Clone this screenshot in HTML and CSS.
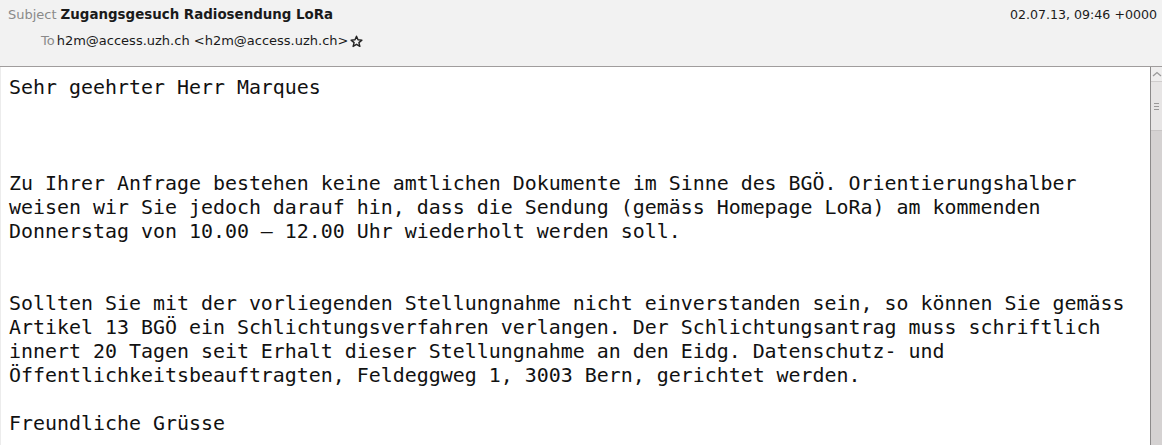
FILE: index.html
```html
<!DOCTYPE html>
<html>
<head>
<meta charset="utf-8">
<link rel="stylesheet" href="styles.css">
</head>
<body>
<div class="app">
  <header class="hdr">
    <div class="row row1">
      <span class="lbl">Subject</span>
      <span class="subj">Zugangsgesuch Radiosendung LoRa</span>
      <span class="date">02.07.13, 09:46 +0000</span>
    </div>
    <div class="row row2">
      <span class="lbl">To</span>
      <span class="addr">h2m@access.uzh.ch &lt;h2m@access.uzh.ch&gt;</span>
      <svg class="star" width="13" height="13" viewBox="0 0 13 13"><path d="M6.5 1.2 L8 4.8 L11.9 5.1 L8.9 7.6 L9.9 11.4 L6.5 9.3 L3.1 11.4 L4.1 7.6 L1.1 5.1 L5 4.8 Z" fill="none" stroke="#222" stroke-width="1.4" stroke-linejoin="round"/></svg>
    </div>
  </header>
  <main class="main">
    <pre class="msg">Sehr geehrter Herr Marques



Zu Ihrer Anfrage bestehen keine amtlichen Dokumente im Sinne des BGÖ. Orientierungshalber
weisen wir Sie jedoch darauf hin, dass die Sendung (gemäss Homepage LoRa) am kommenden
Donnerstag von 10.00 – 12.00 Uhr wiederholt werden soll.


Sollten Sie mit der vorliegenden Stellungnahme nicht einverstanden sein, so können Sie gemäss
Artikel 13 BGÖ ein Schlichtungsverfahren verlangen. Der Schlichtungsantrag muss schriftlich
innert 20 Tagen seit Erhalt dieser Stellungnahme an den Eidg. Datenschutz- und
Öffentlichkeitsbeauftragten, Feldeggweg 1, 3003 Bern, gerichtet werden.

Freundliche Grüsse</pre>
    <div class="sbar">
      <div class="sb-btn"><svg width="10" height="6" viewBox="0 0 10 6"><path d="M1 5 L5 1.5 L9 5" fill="none" stroke="#9a9a9a" stroke-width="1.3"/></svg></div>
      <div class="sb-thumb"><span></span><span></span><span></span></div>
      <div class="sb-track"></div>
    </div>
  </main>
</div>
</body>
</html>
```
FILE: styles.css
```css
html, body { margin: 0; padding: 0; }
body { width: 1162px; height: 445px; overflow: hidden; background: #fff; }
.app { display: flex; flex-direction: column; height: 445px; }
.hdr {
  background: #f2f2f2;
  border-bottom: 1px solid #a09d9d;
  box-sizing: border-box;
  height: 67px;
  font-family: "DejaVu Sans", sans-serif;
  font-size: 13px;
  color: #1a1a1a;
  padding: 5px 5px 0 8px;
}
.row { display: flex; align-items: center; height: 19px; }
.row2 { margin-top: 7px; padding-left: 33px; }
.lbl { color: #8a8a8a; margin-right: 4px; }
.row2 .lbl { margin-right: 2px; }
.subj { font-weight: bold; color: #1a1a1a; font-size: 13.4px; }
.date { margin-left: auto; color: #1a1a1a; font-size: 12.6px; }
.star { margin-left: 2px; margin-top: 1px; }
.main { flex: 1; display: flex; min-height: 0; }
.msg {
  flex: 1;
  margin: 0;
  padding: 9px 0 0 8px;
  border-left: 1px solid #ececec;
  font-family: "DejaVu Sans Mono", monospace;
  font-size: 19.93px;
  line-height: 24px;
  color: #111;
  overflow: hidden;
}
.sbar {
  width: 11px;
  border-left: 1px solid #8c8a8a;
  display: flex;
  flex-direction: column;
  background: #d5d2d2;
}
.sb-btn {
  height: 14px;
  background: #efeeee;
  display: flex;
  align-items: center;
  justify-content: center;
  border-bottom: 1px solid #d0cdcd;
}
.sb-thumb {
  height: 48px;
  background: #e7e5e5;
  border-bottom: 1px solid #c8c5c5;
  display: flex;
  flex-direction: column;
  align-items: center;
  justify-content: center;
  gap: 2px;
}
.sb-thumb span { display: block; width: 5px; height: 1px; background: #9a9898; }
.sb-track { flex: 1; }
```
